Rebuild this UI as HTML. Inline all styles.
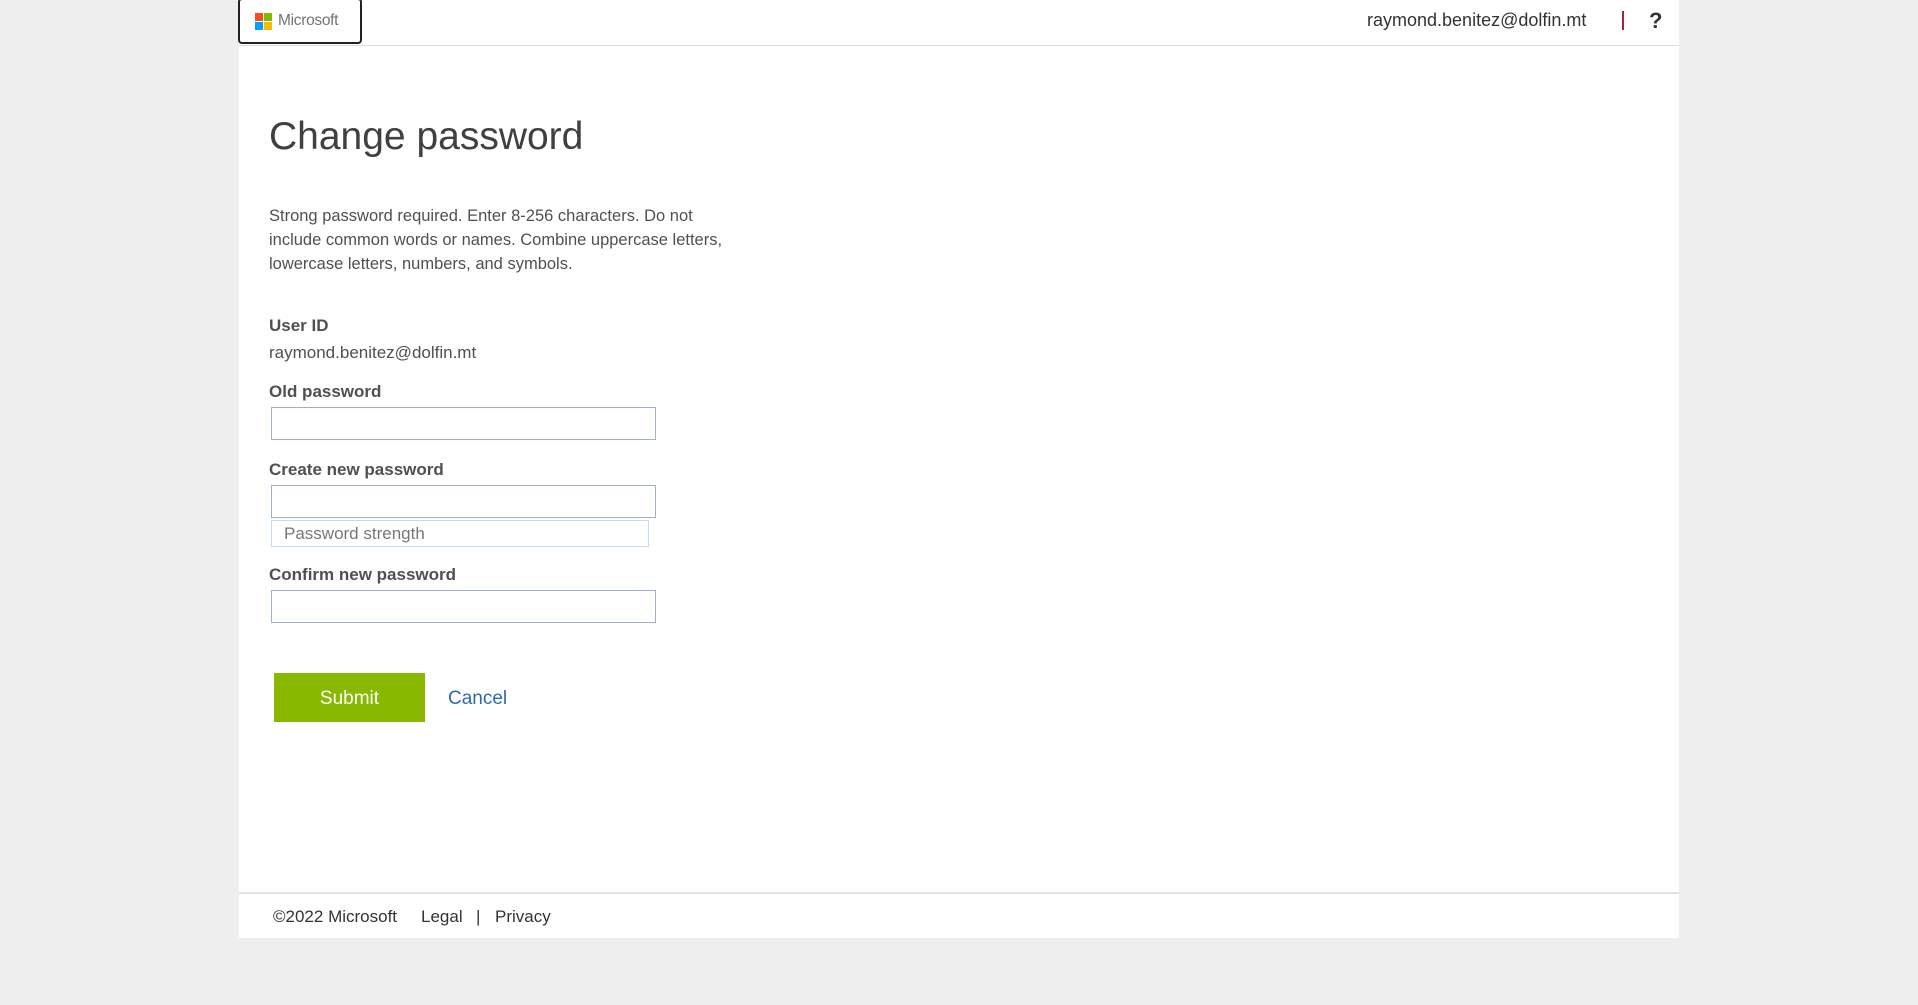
<!DOCTYPE html>
<html><head><meta charset="utf-8"><style>
*{margin:0;padding:0;box-sizing:border-box}
body{width:1918px;height:1005px;background:#eeeeee;font-family:"Liberation Sans",sans-serif;color:#505050;position:relative;overflow:hidden}
.c{position:absolute;left:239px;top:0;width:1440px;height:938px;background:#fff}
.a{position:absolute;white-space:nowrap}
.hd{position:absolute;left:0;top:45px;width:1440px;height:1px;background:#dcdcdc}
.logo{position:absolute;left:-1px;top:-2px;width:124px;height:46px;border:2px solid #222;border-radius:4px;background:#fff}
.in{position:absolute;left:32px;width:385px;height:33px;border:1px solid #9fb0c4;background:#fff}
.lb{font-weight:bold;font-size:17px;color:#505050}
</style></head><body>
<div class="c">
<div class="hd"></div>
<div class="logo">
<div class="a" style="left:15px;top:13px;width:8px;height:8px;background:#f25022"></div>
<div class="a" style="left:24px;top:13px;width:8px;height:8px;background:#7fba00"></div>
<div class="a" style="left:15px;top:22px;width:8px;height:8px;background:#00a4ef"></div>
<div class="a" style="left:24px;top:22px;width:8px;height:8px;background:#ffb900"></div>
<div class="a" style="left:38px;top:12px;font-size:15.5px;color:#737373;letter-spacing:-0.3px">Microsoft</div>
</div>
<div class="a" style="left:1128px;top:10px;font-size:18px;color:#333">raymond.benitez@dolfin.mt</div>
<div class="a" style="left:1383px;top:11px;width:2px;height:19px;background:#a4262c"></div>
<div class="a" style="left:1410px;top:8px;font-size:22px;font-weight:bold;color:#333">?</div>

<div class="a" style="left:30px;top:115px;font-size:39px;font-weight:300;color:#404040">Change password</div>
<div class="a" style="left:30px;top:204px;font-size:16.5px;line-height:24px;white-space:normal;width:460px">Strong password required. Enter 8-256 characters. Do not include common words or names. Combine uppercase letters, lowercase letters, numbers, and symbols.</div>

<div class="a lb" style="left:30px;top:316px">User ID</div>
<div class="a" style="left:30px;top:343px;font-size:17px">raymond.benitez@dolfin.mt</div>
<div class="a lb" style="left:30px;top:382px">Old password</div>
<div class="in" style="top:407px"></div>
<div class="a lb" style="left:30px;top:460px">Create new password</div>
<div class="in" style="top:485px"></div>
<div class="a" style="left:32px;top:520px;width:378px;height:27px;border:1px solid #c5dcf0;font-size:17px;color:#777;padding:3px 0 0 12px">Password strength</div>
<div class="a lb" style="left:30px;top:565px">Confirm new password</div>
<div class="in" style="top:590px"></div>

<div class="a" style="left:35px;top:673px;width:151px;height:49px;background:#88b800;color:#fff;font-size:19px;text-align:center;line-height:51px">Submit</div>
<div class="a" style="left:209px;top:688px;font-size:19px;color:#2e6ab0">Cancel</div>

<div class="a" style="left:0;top:892px;width:1440px;height:2px;background:#e2e2e2"></div>
<div class="a" style="left:34px;top:907px;font-size:17px;color:#333">©2022 Microsoft</div>
<div class="a" style="left:182px;top:907px;font-size:17px;color:#333">Legal</div>
<div class="a" style="left:237px;top:907px;font-size:17px;color:#333">|</div>
<div class="a" style="left:256px;top:907px;font-size:17px;color:#333">Privacy</div>
</div>
</body></html>
